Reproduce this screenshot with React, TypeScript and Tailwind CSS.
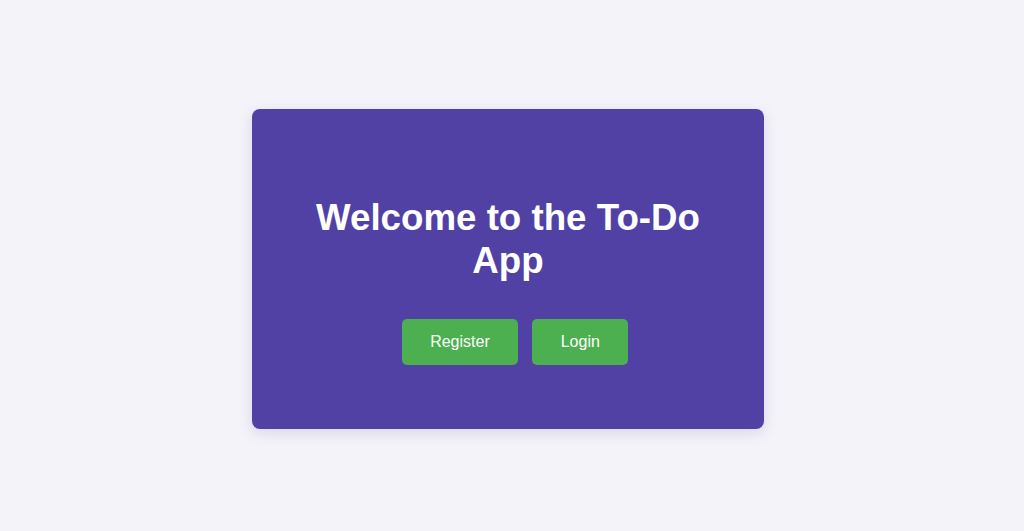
export default function App() {
    return (
        <div className="min-h-[531px] w-full bg-[#f4f3fa] flex items-center justify-center pr-[8px] pt-[7px] font-['Liberation_Sans',Arial,sans-serif]">
            <div className="w-[512px] h-[320px] bg-[#5141a5] rounded-lg shadow-[0_4px_14px_rgba(60,50,120,0.15)] flex flex-col items-center px-12 pt-[87px]">
                <h1 className="text-[36.7px] leading-[43px] font-bold text-white text-center">
                    Welcome to the To-Do App
                </h1>
                <div className="mt-[37px] flex">
                    <button className="ml-[14px] h-[46px] px-[28.5px] bg-[#4caf50] text-white text-base rounded-[5px]">
                        Register
                    </button>
                    <button className="ml-[14px] h-[46px] px-[28.5px] bg-[#4caf50] text-white text-base rounded-[5px]">
                        Login
                    </button>
                </div>
            </div>
        </div>
    )
}
